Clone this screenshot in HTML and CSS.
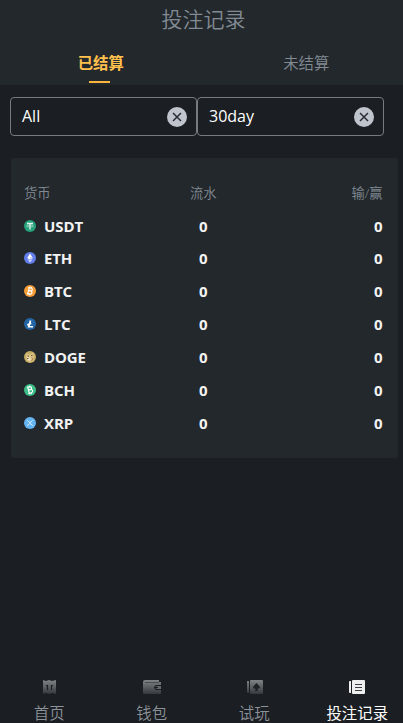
FILE: index.html
```html
<!DOCTYPE html>
<html lang="zh-CN">
<head>
<meta charset="utf-8">
<title>投注记录</title>
<link rel="stylesheet" href="styles.css">
</head>
<body>
<div class="app">
  <header class="header">
    <h1 class="title">投注记录</h1>
    <nav class="tabs">
      <a class="tab active"><span>已结算</span></a>
      <a class="tab"><span>未结算</span></a>
    </nav>
  </header>
  <div class="filters">
    <div class="select"><span>All</span><svg viewBox="0 0 20 20"><circle cx="10" cy="10" r="10" fill="#c0c4cc"/><path d="M6 6l8 8M14 6l-8 8" stroke="#292d31" stroke-width="1.5"/></svg></div>
    <div class="select second"><span>30day</span><svg viewBox="0 0 20 20"><circle cx="10" cy="10" r="10" fill="#c0c4cc"/><path d="M6 6l8 8M14 6l-8 8" stroke="#292d31" stroke-width="1.5"/></svg></div>
  </div>
  <main class="card">
    <div class="row head"><span>货币</span><span>流水</span><span>输/赢</span></div>
    <div class="row"><span class="coin"><svg viewBox="0 0 24 24"><circle cx="12" cy="12" r="12" fill="#26a17b"/><path d="M6 7h12M12 7v12" stroke="#e5f5f0" stroke-width="2.6"/><ellipse cx="12" cy="12" rx="7" ry="1.8" fill="none" stroke="#cbeadf" stroke-width="1.2"/></svg><b>USDT</b></span><b>0</b><b>0</b></div>
    <div class="row"><span class="coin"><svg viewBox="0 0 24 24"><circle cx="12" cy="12" r="12" fill="#627eea"/><path d="M12 3l5.5 9-5.5 3.500-5.500-3.500z" fill="#fff"/><path d="M6.500 13.500l5.500 3.500 5.500-3.500L12 21z" fill="#dce3ff"/><path d="M12 9.500l5.500 2.500-5.500 3.500z" fill="#c0cbf7"/></svg><b>ETH</b></span><b>0</b><b>0</b></div>
    <div class="row"><span class="coin"><svg viewBox="0 0 24 24"><circle cx="12" cy="12" r="12" fill="#f79d35"/><g transform="rotate(14 12 12)" fill="none" stroke="#fff" stroke-width="2.3"><path d="M9 6v12M7 6h6c4 0 4 5.500 0 5.500H9M13 11.500c5 0 5 6.500 0 6.500H7M10 3.500V6M13 3.500V6M10 18v2.500M13 18v2.500"/></g></svg><b>BTC</b></span><b>0</b><b>0</b></div>
    <div class="row"><span class="coin"><svg viewBox="0 0 24 24"><circle cx="12" cy="12" r="12" fill="#2466a5"/><path d="M13 5L9.500 17.500H18M6.500 14l8-3.500" fill="none" stroke="#fff" stroke-width="3.400"/></svg><b>LTC</b></span><b>0</b><b>0</b></div>
    <div class="row"><span class="coin"><svg viewBox="0 0 24 24"><circle cx="12" cy="12" r="12" fill="#c5aa61"/><path d="M5 5l4 2 5-1 4-3 2 8-1 8-7 4-7-5-1-7z" fill="#dec58b"/><path d="M6 12l6 2 1 4-5 1z" fill="#f2e8c9"/><path d="M7 9h3v2H7zM14 8h3v2h-3zM6 14h3v2H6z" fill="#66552d"/><path d="M15 13l3 2-3 5" fill="none" stroke="#a6864b" stroke-width="2"/></svg><b>DOGE</b></span><b>0</b><b>0</b></div>
    <div class="row"><span class="coin"><svg viewBox="0 0 24 24"><circle cx="12" cy="12" r="12" fill="#3cbd87"/><g transform="rotate(-14 12 12)" fill="none" stroke="#fff" stroke-width="2.3"><path d="M9 6v12M7 6h6c4 0 4 5.500 0 5.500H9M13 11.500c5 0 5 6.500 0 6.500H7M10 3.500V6M13 3.500V6M10 18v2.500M13 18v2.500"/></g></svg><b>BCH</b></span><b>0</b><b>0</b></div>
    <div class="row"><span class="coin"><svg viewBox="0 0 24 24"><circle cx="12" cy="12" r="12" fill="#64b5f1"/><path d="M6.500 6.500l3.500 3.500q2 2 4 0l3.500-3.500M6.500 17.500L10 14q2-2 4 0l3.500 3.500" fill="none" stroke="#e4f5ff" stroke-width="1.700"/></svg><b>XRP</b></span><b>0</b><b>0</b></div>
  </main>
  <nav class="bottom">
    <a class="item"><svg viewBox="0 0 20 16"><defs><linearGradient id="fade" x1="0" y1="0" x2="0" y2="1"><stop stop-color="#808386"/><stop offset="1" stop-color="#35393d"/></linearGradient></defs><path d="M4 1l3 1 3-1 3 1 4-1v14l-4-1-3 1-3-1-3 1z" fill="url(#fade)"/><path d="M8.500 6v5M12.500 6v5M7 6.500h2M12 6.500h2" stroke="#1c1f23" stroke-width="1.200"/></svg><span>首页</span></a>
    <a class="item"><svg viewBox="0 0 20 16"><path d="M3 1h14v2h2v3h-5q-4 2.500 0 5h5v4H2q-1 0-1-1V3q0-2 2-2z" fill="url(#fade)"/><path d="M3 3.500h14" stroke="#4a4e52"/><path d="M13.500 7H19v3h-5.500q-2-1.500 0-3z" fill="#63676a"/><path d="M12 8.500h4M14 6.500v4" stroke="#1c1f23"/></svg><span>钱包</span></a>
    <a class="item"><svg viewBox="0 0 20 16"><path d="M6 1h11q1 0 1 1v12q0 1-1 1H6q-1 0-1-1V2q0-1 1-1zM2 2h2v12H3q-1 0-1-1z" fill="url(#fade)"/><path d="M11.500 4l3.500 4q-.5 2.500-2.800 1.500l.8 2.500h-3l.8-2.500Q8.500 10.500 8 8z" fill="#1e2125"/></svg><span>试玩</span></a>
    <a class="item current"><svg viewBox="0 0 20 16"><path d="M6 1h11q1 0 1 1v12q0 1-1 1H6q-1 0-1-1V2q0-1 1-1zM3 2h1v12H3q-1 0-1-1V3q0-1 1-1z" fill="#eee"/><path d="M8 5.500h7M8 8.500h7M8 11.500h7" stroke="#3c4044" stroke-width="1"/></svg><span>投注记录</span></a>
  </nav>
</div>
</body>
</html>
```
FILE: styles.css
```css
* { box-sizing: border-box; }
html { background: #1b1e22; overflow: hidden; }
body { margin: 0; overflow: hidden; font-family: "Open Sans", "Noto Sans CJK SC", sans-serif; color: #f2f2f2; }
.app { width: 410px; height: 723px; display: flex; flex-direction: column; background: #1b1e22; }
.header { height: 85px; background: #23282c; flex: none; }
.title { margin: 0; padding-right: 3px; height: 40px; font-size: 21px; line-height: 37px; font-weight: 350; text-align: center; color: #828b94; font-family: "Noto Sans CJK SC", sans-serif; }
.tabs { display: flex; height: 45px; padding-right: 2px; margin-right: -1px; margin-left: -3px; }
.tab { flex: 1; display: flex; flex-direction: column; align-items: center; font-size: 15.400px; line-height: 48px; color: #828b94; font-weight: 350; }
.active { color: #ffc04d; font-weight: 700; padding-left: 1px; }
.active::after { content: ""; width: 21px; height: 2px; margin-top: -7px; margin-right: 3px; background: #f9b43d; }
.filters { display: flex; height: 39px; margin: 12px 0 22px 10px; flex: none; }
.select { width: 187px; height: 39px; border: 1px solid #777b7f; border-radius: 4px; padding: 0 9px 0 11px; display: flex; align-items: center; justify-content: space-between; font-size: 16px; line-height: 20px; color: #fff; }
.select span { padding-bottom: 1px; }
.select svg { width: 20px; height: 20px; }
.card { width: 387px; height: 300px; margin-left: 10.600px; background: #23282c; border-radius: 3px; padding: 18px 15px 0 13.400px; flex: none; }
.row { display: grid; grid-template-columns: 1fr 60px 1fr; align-items: center; height: 32.850px; font-size: 15px; line-height: 20px; }
.row > :nth-child(2) { text-align: center; }
.row > :nth-child(3) { text-align: right; }
.head { height: 33.200px; font-size: 13.300px; font-weight: 350; color: #828b94; }
.coin { display: flex; align-items: center; gap: 8px; }
.coin svg { width: 12px; height: 12px; flex: none; }
.coin b { letter-spacing: -.1px; }
.bottom { display: flex; height: 53px; margin-top: auto; }
.item { flex: 1; display: flex; flex-direction: column; align-items: center; color: #8b9299; font-size: 15.400px; font-weight: 350; padding-top: 9px; }
.item svg { width: 20px; height: 16px; margin-right: 4px; flex: none; }
.item:nth-child(1) svg { margin-right: 5px; }
.item:nth-child(3) svg, .item:nth-child(4) svg { margin-right: 3px; }
.item span { line-height: 18px; margin-top: 10px; margin-right: 4px; white-space: nowrap; }
.item.current { color: #fff; font-weight: 400; }
.item.current span { margin-right: 3px; }
```
